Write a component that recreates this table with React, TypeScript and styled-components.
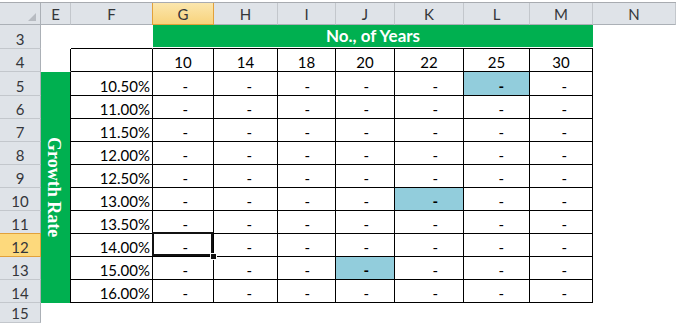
import React from "react";
import styled, { createGlobalStyle, css } from "styled-components";

const Global = createGlobalStyle`
  html, body { margin: 0; padding: 0; background: #fff; overflow: hidden; }
  * { box-sizing: border-box; }
`;

const HEAD_BG = "#dfe3e8";
const HEAD_LINE = "#c3c7cc";
const HEAD_EDGE = "#abb0b6";
const SEL_BORDER = "#e2a13a";
const GREEN = "#00b050";
const HILITE = "#92cddc";

const Page = styled.div`
  width: 676px;
  height: 323px;
  display: flex;
  flex-direction: column;
  background: #fff;
  font-family: Lato, "Open Sans", sans-serif;
`;

const TopBar = styled.div`
  height: 3px;
  flex: none;
  border-bottom: 1px solid #a8abb0;
`;

const Sheet = styled.div`
  display: grid;
  grid-template-columns: 41px 30px 82px 61px 64px 58px 59px 69px 66px 63px 83px;
  grid-template-rows: 22px 24px 23px 24px repeat(9, 23px) 20px;
`;

const Corner = styled.div`
  background: ${HEAD_BG};
  border-right: 1px solid ${HEAD_EDGE};
  border-bottom: 1px solid ${HEAD_EDGE};
  display: flex;
  align-items: flex-end;
  justify-content: flex-end;
  padding: 0 4px 3px 0;
`;

const ColHead = styled.div<{ $selected?: boolean }>`
  background: ${HEAD_BG};
  border-right: 1px solid ${HEAD_LINE};
  border-bottom: 1px solid ${HEAD_EDGE};
  display: flex;
  align-items: flex-end;
  justify-content: center;
  font-size: 15px;
  line-height: 18px;
  color: #34363a;
  padding-bottom: 1px;
  ${(p) =>
    p.$selected &&
    css`
      background: linear-gradient(#fbe6ad, #f8d37c);
      border-right-color: ${SEL_BORDER};
      border-bottom-color: ${SEL_BORDER};
      box-shadow: -1px 0 0 ${SEL_BORDER};
    `}
`;

const RowHead = styled.div<{ $selected?: boolean }>`
  background: ${HEAD_BG};
  border-right: 1px solid ${HEAD_EDGE};
  border-bottom: 1px solid ${HEAD_LINE};
  display: flex;
  align-items: flex-end;
  justify-content: center;
  font-size: 15px;
  line-height: 18px;
  color: #34363a;
  ${(p) =>
    p.$selected &&
    css`
      background: #fdd97c;
      border-right-color: ${SEL_BORDER};
      border-bottom-color: ${SEL_BORDER};
      box-shadow: 0 -1px 0 ${SEL_BORDER};
    `}
`;

const Cell = styled.div<{
  $bg?: string;
  $br?: boolean;
  $bb?: boolean;
  $align?: "left" | "center" | "right";
  $bold?: boolean;
  $pr?: number;
}>`
  position: relative;
  background: ${(p) => p.$bg || "#fff"};
  border-right: 1px solid ${(p) => (p.$br ? "#000" : "transparent")};
  border-bottom: 1px solid ${(p) => (p.$bb ? "#000" : "transparent")};
  display: flex;
  align-items: flex-end;
  justify-content: ${(p) =>
    p.$align === "right" ? "flex-end" : p.$align === "center" ? "center" : "flex-start"};
  padding-right: ${(p) => p.$pr ?? 0}px;
  font-size: 15px;
  line-height: 18px;
  font-weight: ${(p) => (p.$bold ? 700 : 400)};
  color: #000;
  white-space: nowrap;
`;

const Band = styled.div`
  grid-column: span 7;
  background: ${GREEN};
  border-bottom: 1px solid #000;
  box-shadow: inset 0 -1px 0 #fff, -1px 0 0 ${GREEN};
  display: flex;
  align-items: center;
  justify-content: center;
  color: #fff;
  font-weight: 700;
  font-size: 17px;
  line-height: 18px;
  padding-bottom: 1px;
`;

const SideBand = styled.div`
  grid-row: span 10;
  background: ${GREEN};
  border-right: 1px solid #000;
  display: flex;
  align-items: center;
  justify-content: center;
`;

const SideLabel = styled.span`
  writing-mode: vertical-rl;
  font-family: "Liberation Serif", "DejaVu Serif", serif;
  font-weight: 700;
  font-size: 18px;
  color: #fff;
  line-height: 1;
  margin-left: -3px;
`;

const Selection = styled.div`
  position: absolute;
  top: -2px;
  left: -1px;
  right: 0;
  bottom: 0;
  border: 2px solid #111;
  pointer-events: none;
`;

const Handle = styled.div`
  position: absolute;
  right: -3px;
  bottom: -3px;
  width: 5px;
  height: 5px;
  background: #111;
  box-shadow: 0 0 0 1px #fff;
  z-index: 2;
`;

const cols = ["E", "F", "G", "H", "I", "J", "K", "L", "M", "N"];
const years = [10, 14, 18, 20, 22, 25, 30];
const rates = ["10.50%", "11.00%", "11.50%", "12.00%", "12.50%", "13.00%", "13.50%", "14.00%", "15.00%", "16.00%"];
const highlights: Record<number, number> = { 0: 5, 5: 4, 8: 3 };
const selected = { row: 7, col: 0 };

const CornerMark = () => (
  <svg width="8" height="8" viewBox="0 0 8 8">
    <polygon points="8,0 8,8 0,8" fill="#b7bbc1" />
  </svg>
);

export default function App() {
  return (
    <Page>
      <Global />
      <TopBar />
      <Sheet>
        <Corner>
          <CornerMark />
        </Corner>
        {cols.map((c) => (
          <ColHead key={c} $selected={c === "G"}>
            {c}
          </ColHead>
        ))}

        {/* Row 3 */}
        <RowHead>3</RowHead>
        <Cell />
        <Cell $bb />
        <Band>No., of Years</Band>
        <Cell />

        {/* Row 4 */}
        <RowHead>4</RowHead>
        <Cell $br />
        <Cell $br $bb />
        {years.map((y) => (
          <Cell key={y} $br $bb $align="center">
            {y}
          </Cell>
        ))}
        <Cell />

        {/* Rows 5-14 */}
        {rates.map((r, ri) => (
          <React.Fragment key={r}>
            <RowHead $selected={ri === selected.row}>{ri + 5}</RowHead>
            {ri === 0 && (
              <SideBand>
                <SideLabel>Growth Rate</SideLabel>
              </SideBand>
            )}
            <Cell $br $bb $align="right" $pr={2}>
              {r}
            </Cell>
            {years.map((y, ci) => {
              const hi = highlights[ri] === ci;
              const sel = ri === selected.row && ci === selected.col;
              return (
                <Cell key={y} $br $bb $align="right" $pr={25} $bg={hi ? HILITE : undefined} $bold={hi}>
                  -
                  {sel && (
                    <>
                      <Selection />
                      <Handle />
                    </>
                  )}
                </Cell>
              );
            })}
            <Cell />
          </React.Fragment>
        ))}

        {/* Row 15 */}
        <RowHead>15</RowHead>
        {cols.map((c) => (
          <Cell key={c} />
        ))}
      </Sheet>
    </Page>
  );
}
